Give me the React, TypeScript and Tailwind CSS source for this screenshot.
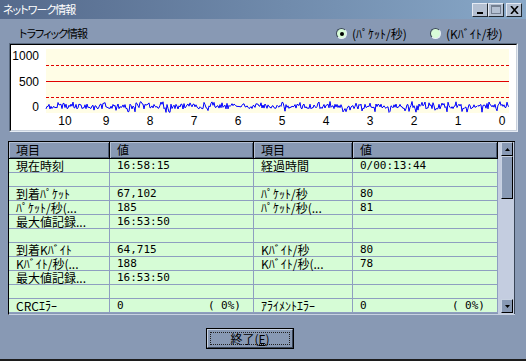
import React from "react";

function mulberry32(a: number) {
  return function () {
    a |= 0;
    a = (a + 0x6d2b79f5) | 0;
    let t = Math.imul(a ^ (a >>> 15), 1 | a);
    t = (t + Math.imul(t ^ (t >>> 7), 61 | t)) ^ t;
    return ((t ^ (t >>> 14)) >>> 0) / 4294967296;
  };
}

const noise = (() => {
  const r = mulberry32(12345);
  const pts: string[] = [];
  for (let x = 46; x <= 509; x++) {
    let v = 106.5 + (r() - 0.5) * 5;
    const k = r();
    if (k < 0.12) v = 101.5 + r() * 3;
    else if (k < 0.19) v = 110 + r() * 2.5;
    pts.push(`${x},${v.toFixed(1)}`);
  }
  return pts.join(" ");
})();

type Row = [string, string, string, string];
const rows: Row[] = [
  ["現在時刻", "16:58:15", "経過時間", "0/00:13:44"],
  ["", "", "", ""],
  ["到着ﾊﾟｹｯﾄ", "67,102", "ﾊﾟｹｯﾄ/秒", "80"],
  ["ﾊﾟｹｯﾄ/秒(...", "185", "ﾊﾟｹｯﾄ/秒(...", "81"],
  ["最大値記録...", "16:53:50", "", ""],
  ["", "", "", ""],
  ["到着Kﾊﾞｲﾄ", "64,715", "Kﾊﾞｲﾄ/秒", "80"],
  ["Kﾊﾞｲﾄ/秒(...", "188", "Kﾊﾞｲﾄ/秒(...", "78"],
  ["最大値記録...", "16:53:50", "", ""],
  ["", "", "", ""],
  ["CRCｴﾗｰ", "0|( 0%)", "ｱﾗｲﾒﾝﾄｴﾗｰ", "0|( 0%)"],
];

const ui = "[font-family:'Noto_Sans_CJK_JP',sans-serif]";
const mono = "[font-family:'DejaVu_Sans_Mono','Noto_Sans_CJK_JP',monospace]";

function Value({ v }: { v: string }) {
  if (v.includes("|")) {
    const [a, b] = v.split("|");
    return (
      <div className="flex justify-between pr-[12px] whitespace-pre">
        <span>{a}</span>
        <span>{b}</span>
      </div>
    );
  }
  return <span className="whitespace-pre">{v}</span>;
}

function Radio({ checked, label }: { checked: boolean; label: string }) {
  return (
    <div className="flex items-center gap-[5px]">
      <div className="w-[11px] h-[11px] rounded-full bg-[#d8fcd8] border border-t-[#3a4658] border-l-[#3a4658] border-b-[#e8eef8] border-r-[#e8eef8] flex items-center justify-center">
        {checked && <div className="w-[4px] h-[4px] rounded-full bg-black" />}
      </div>
      <span className={`${ui} text-[12px] leading-[14px] text-black`}>{label}</span>
    </div>
  );
}

function TitleBtn({ children, disabled }: { children: React.ReactNode; disabled?: boolean }) {
  return (
    <div className="w-[16px] h-[14px] bg-[#b4c0d2] border border-t-[#e4eaf4] border-l-[#e4eaf4] border-b-[#202830] border-r-[#202830] flex items-center justify-center">
      <div className={disabled ? "opacity-60" : ""}>{children}</div>
    </div>
  );
}

export default function App() {
  return (
    <div className="w-[526px] h-[361px] bg-[#8899b4] flex flex-col overflow-hidden border-b-2 border-[#1c1c1c]">
      {/* Title bar */}
      <div className="h-[19px] shrink-0 bg-gradient-to-r from-[#556a8c] to-[#88a8c8] flex items-center pl-[3px] pr-[4px]">
        <span className={`${ui} text-white text-[11px] leading-[13px] [font-feature-settings:'palt'] tracking-[-1px]`}>ネットワーク情報</span>
        <div className="ml-auto flex items-center">
          <TitleBtn>
            <svg width="8" height="8" viewBox="0 0 8 8"><rect x="1" y="6" width="6" height="2" fill="#000" /></svg>
          </TitleBtn>
          <TitleBtn disabled>
            <svg width="10" height="9" viewBox="0 0 10 9"><rect x="0.5" y="0.5" width="9" height="8" fill="none" stroke="#4a5566" /><rect x="0" y="0" width="10" height="2" fill="#4a5566" /></svg>
          </TitleBtn>
          <div className="w-[2px]" />
          <TitleBtn>
            <svg width="9" height="8" viewBox="0 0 9 8"><path d="M1 0 L8 8 M8 0 L1 8" stroke="#000" strokeWidth="1.6" /></svg>
          </TitleBtn>
        </div>
      </div>

      {/* Traffic header row */}
      <div className="h-[24px] shrink-0 flex items-center pt-[5px]">
        <span className={`${ui} text-black text-[11px] leading-[13px] w-[336px] pl-[19px] [font-feature-settings:'palt'] tracking-[-1px]`}>トラフィック情報</span>
        <div className="w-[94px]">
          <Radio checked label="(ﾊﾟｹｯﾄ/秒)" />
        </div>
        <Radio checked={false} label="(Kﾊﾞｲﾄ/秒)" />
      </div>

      {/* Chart panel */}
      <div className="ml-[9px] w-[509px] h-[89px] shrink-0 border border-t-[#5a6a80] border-l-[#5a6a80] border-b-[#e6ecf4] border-r-[#e6ecf4]">
        <div className="w-full h-full border border-t-black border-l-black border-b-[#c8d0dc] border-r-[#c8d0dc] bg-white">
          <svg width="505" height="85" viewBox="11 45 505 85" className="block">
            <rect x="46" y="49" width="463" height="64" fill="#fffde6" />
            <line x1="46" y1="65.5" x2="509" y2="65.5" stroke="#e00000" strokeDasharray="3 2" />
            <line x1="46" y1="81.5" x2="509" y2="81.5" stroke="#e00000" />
            <line x1="46" y1="97.5" x2="509" y2="97.5" stroke="#e00000" strokeDasharray="3 2" />
            <polyline points={noise} fill="none" stroke="#0000ff" strokeWidth="1" />
            <g fontFamily="'Liberation Sans', Arial, sans-serif" fontSize="12" fill="#000">
              <text x="39" y="60" textAnchor="end">1000</text>
              <text x="39" y="86" textAnchor="end">500</text>
              <text x="39" y="111" textAnchor="end">0</text>
              {[
                ["10", 65],
                ["9", 106],
                ["8", 150],
                ["7", 194],
                ["6", 238],
                ["5", 282],
                ["4", 326],
                ["3", 370],
                ["2", 414],
                ["1", 458],
                ["0", 502],
              ].map(([t, x]) => (
                <text key={t as string} x={x as number} y="124.5" textAnchor="middle">
                  {t}
                </text>
              ))}
            </g>
          </svg>
        </div>
      </div>

      {/* Table */}
      <div className="mt-[9px] ml-[8px] w-[507px] h-[174px] shrink-0 flex border-l border-t border-black border-b border-b-[#c8d2e2] overflow-hidden">
        <div className="w-[489px] flex flex-col">
          <div className="grid grid-cols-[101px_144px_99px_145px] h-[17px] shrink-0">
            {["項目", "値", "項目", "値"].map((h, i) => (
              <div
                key={i}
                className={`${ui} text-[12px] leading-[14px] text-black bg-[#8899b4] border-r border-b border-black shadow-[inset_1px_1px_0_#b4c0d4,inset_-1px_-1px_0_#4a5a72] flex items-center pl-[7px]`}
              >
                {h}
              </div>
            ))}
          </div>
          {rows.map((r, ri) => (
            <div key={ri} className="grid grid-cols-[101px_144px_99px_145px] h-[14px] shrink-0">
              {r.map((c, ci) => (
                <div
                  key={ci}
                  className={`bg-[#d6fcd6] border-r border-b border-[#8e9ec0] text-black leading-[13px] flex items-center pl-[7px] whitespace-nowrap ${
                    ci % 2 === 0 ? `${ui} text-[12px]` : `${mono} text-[11px]`
                  }`}
                >
                  {ci % 2 === 0 ? c : <div className="w-full"><Value v={c} /></div>}
                </div>
              ))}
            </div>
          ))}
        </div>
        {/* Scrollbar */}
        <div className="w-[17px] flex flex-col bg-[#c4cde0] pl-[3px] border-r border-[#3a4658]">
          <div className="h-[14px] w-[12px] bg-[#8899b4] border border-t-[#c8d2e2] border-l-[#c8d2e2] border-b-black border-r-black flex items-center justify-center">
            <svg width="5" height="3" viewBox="0 0 5 3"><path d="M2.5 0 L5 3 L0 3 Z" fill="#000" /></svg>
          </div>
          <div className="h-[43px] w-[12px] bg-[#8899b4] border border-t-[#c8d2e2] border-l-[#c8d2e2] border-b-black border-r-black" />
          <div className="flex-1" />
          <div className="h-[14px] w-[12px] bg-[#8899b4] border border-t-[#c8d2e2] border-l-[#c8d2e2] border-b-black border-r-black flex items-center justify-center mb-[1px]">
            <svg width="5" height="3" viewBox="0 0 5 3"><path d="M0 0 L5 0 L2.5 3 Z" fill="#000" /></svg>
          </div>
        </div>
      </div>

      {/* Button */}
      <div className="mt-[13px] ml-[206px] w-[88px] h-[21px] border border-black shrink-0">
        <div className="w-full h-full bg-[#8899b4] border border-t-[#c8d2e2] border-l-[#c8d2e2] border-b-[#3a4658] border-r-[#3a4658] p-[2px]">
          <div className={`w-full h-full border border-dotted border-[#202020] flex items-center justify-center ${ui} text-[12px] leading-[14px] text-black`}>
            終了(<span className="underline">E</span>)
          </div>
        </div>
      </div>
    </div>
  );
}
